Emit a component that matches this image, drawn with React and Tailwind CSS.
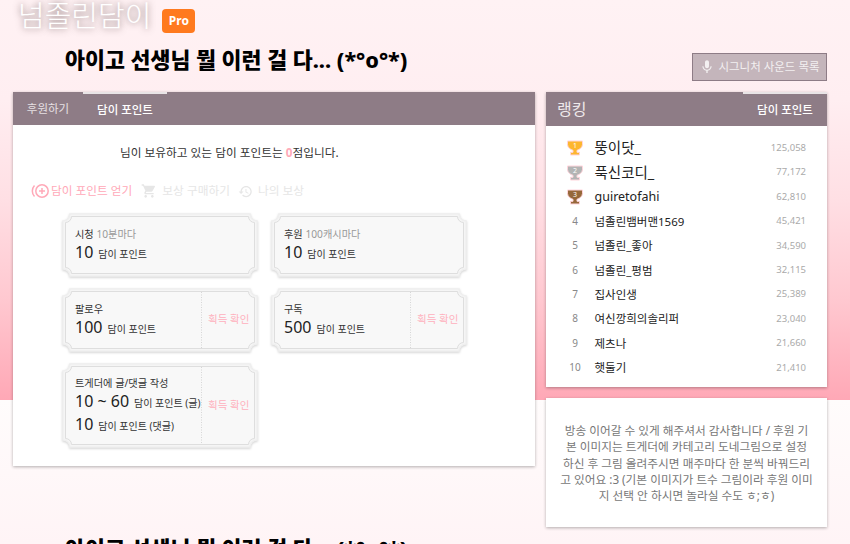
import React from "react";

const font = { fontFamily: '"Noto Sans", "Noto Sans CJK KR", sans-serif' };

const ranking = [
  { rank: 1, name: "뚱이닷_", points: "125,058", color: "#fdb62f", size: "text-[14.500px]" },
  { rank: 2, name: "푹신코디_", points: "77,172", color: "#b4b4b4", size: "text-[14.500px]" },
  { rank: 3, name: "guiretofahi", points: "62,810", color: "#96683a", size: "text-[12.500px]" },
  { rank: 4, name: "넘졸린뱀버맨1569", points: "45,421", size: "text-[11.500px]" },
  { rank: 5, name: "넘졸린_좋아", points: "34,590", size: "text-[11.500px]" },
  { rank: 6, name: "넘졸린_평범", points: "32,115", size: "text-[11.500px]" },
  { rank: 7, name: "집사인생", points: "25,389", size: "text-[11.500px]" },
  { rank: 8, name: "여신깡희의솔리퍼", points: "23,040", size: "text-[11.500px]" },
  { rank: 9, name: "제츠나", points: "21,660", size: "text-[11.500px]" },
  { rank: 10, name: "햇둘기", points: "21,410", size: "text-[11.500px]" },
];

const Trophy = ({ rank, color }) => (
  <svg width="18" height="18" viewBox="0 0 18 18" className="block">
    <path
      d="M1.500 2h15v3.500c0 3-3.200 5.300-5.500 5.800v2h2.500v2.700h-9v-2.700H7v-2C4.700 10.800 1.500 8.500 1.500 5.500z"
      fill={color}
      stroke="#ffd5dc"
      strokeWidth="1"
    />
    <text x="9" y="8.800" textAnchor="middle" fontSize="7" fill="#fff" fontFamily="Noto Sans">
      {rank}
    </text>
  </svg>
);

// concave-cornered ticket path, i = inset from the box, r = notch radius
const ticketPath = (w, h, i, r) =>
  `M${r + i} ${i}H${w - r - i}a${r} ${r} 0 0 0 ${r} ${r}V${h - r - i}a${r} ${r} 0 0 0 ${-r} ${r}H${r + i}a${r} ${r} 0 0 0 ${-r} ${-r}V${r + i}a${r} ${r} 0 0 0 ${r} ${-r}z`;

const TicketOutline = ({ height, split }) => (
  <svg
    width="196"
    height={height}
    viewBox={`0 0 196 ${height}`}
    className="absolute inset-0 pointer-events-none drop-shadow-[0_1px_1px_rgba(0,0,0,0.18)]"
  >
    <path d={ticketPath(196, height, 1, 7)} fill="#f5f5f5" stroke="#efefef" strokeWidth="1.500" />
    <path d={ticketPath(196, height, 3.500, 6)} fill="#f8f8f8" stroke="#dedede" strokeWidth="1" />
    {split && (
      <line x1="139.500" x2="139.500" y1="4" y2={height - 4} stroke="#d6d6d6" strokeDasharray="1 1.500" />
    )}
  </svg>
);

const Ticket = ({ height, split, children }) => (
  <div className="relative w-[196px] flex" style={{ height }}>
    <TicketOutline height={height} split={split} />
    <div className="relative w-[139px] shrink-0 pl-[13px] flex flex-col justify-center text-[#333]">{children}</div>
    {split && (
      <div className="relative flex-1 pl-[7px] flex items-center text-[10.500px] text-[#ffb0bd] whitespace-nowrap">
        획득 확인
      </div>
    )}
  </div>
);

const Amount = ({ value, label }) => (
  <div className="flex items-baseline gap-[5px] whitespace-nowrap leading-[21px]">
    <span className="text-[16px] text-[#222]">{value}</span>
    <span className="text-[10px] text-[#333]">{label}</span>
  </div>
);

const Heading = () => (
  <h2 className="text-[21.700px] leading-[30px] font-extrabold text-black whitespace-nowrap">
    아이고 선생님 뭘 이런 걸 다... (*°o°*)
  </h2>
);

export default function App() {
  return (
    <div
      className="w-[850px] h-[544px] overflow-hidden bg-[linear-gradient(#fff2f4_0px,#ffeef1_100px,#ffdfe4_200px,#ffc8d0_300px,#ffa8b6_400px,#fffcfc_400px,#fff4f6_544px)]"
      style={font}
    >
      <div className="h-[45px] pl-[18px] pt-[1px] flex items-start gap-[11px]">
        <h1 className="text-[29px] leading-[30px] font-light text-white whitespace-nowrap [text-shadow:0_0_7px_rgba(70,50,50,0.75)]">
          넘졸린담이
        </h1>
        <span className="mt-[8px] w-[33px] h-[24px] rounded-[4px] bg-[#ff7a1e] text-white text-[12px] font-bold flex items-center justify-center">
          Pro
        </span>
      </div>

      <div className="h-[47px] pl-[65px] pr-[23px] flex items-start justify-between">
        <Heading />
        <button className="mt-[8px] w-[135px] h-[28px] flex items-center justify-center gap-[3px] bg-[#c4b5bb] border border-[#8e7c86] text-[#f3f0f1] text-[11.500px] whitespace-nowrap">
          <svg width="16" height="16" viewBox="0 0 24 24" fill="#f3f0f1">
            <path d="M12 14c1.660 0 2.990-1.340 2.990-3L15 5c0-1.660-1.340-3-3-3S9 3.340 9 5v6c0 1.660 1.340 3 3 3zm5.300-3c0 3-2.540 5.100-5.300 5.100S6.700 14 6.700 11H5c0 3.410 2.720 6.230 6 6.720V21h2v-3.280c3.280-.48 6-3.300 6-6.720h-1.700z" />
          </svg>
          시그니처 사운드 목록
        </button>
      </div>

      <div className="pl-[13px] flex items-start gap-[11px]">
        <section className="w-[522px] h-[374px] bg-white shadow-[0_1px_3px_rgba(0,0,0,0.3)]">
          <div className="h-[33px] bg-[#8e7c86] flex text-[11.500px]">
            <div className="w-[70px] flex items-center justify-center text-[#e6e0e3]">후원하기</div>
            <div className="w-[84px] flex items-center justify-center text-white font-medium border-t-2 border-[#e9e4e6]">
              담이 포인트
            </div>
          </div>

          <p className="mt-[19px] pl-[107px] text-[11.700px] leading-[16px] text-[#333] whitespace-nowrap">
            님이 보유하고 있는 담이 포인트는 <span className="text-[#ffa9b8] font-bold">0</span>점입니다.
          </p>

          <div className="mt-[23px] pl-[18px] h-[16px] flex items-center text-[11.700px] whitespace-nowrap">
            <svg width="19" height="16" viewBox="0 0 19 16" fill="none" stroke="#ffa9b8" strokeWidth="1.500">
              <circle cx="11" cy="8" r="6.200" />
              <path d="M11 5v6M8 8h6" />
              <path d="M3.500 2.500a8 8 0 0 0 0 11" />
            </svg>
            <span className="ml-[1px] text-[#ffa9b8]">담이 포인트 얻기</span>
            <svg width="16" height="16" viewBox="0 0 24 24" fill="#e6e6e6" className="ml-[9px]">
              <path d="M7 18c-1.100 0-1.990.9-1.990 2S5.900 22 7 22s2-.9 2-2-.9-2-2-2zM1 2v2h2l3.600 7.590-1.350 2.450c-.16.28-.25.61-.25.96 0 1.100.9 2 2 2h12v-2H7.420c-.14 0-.25-.11-.25-.25l.03-.12.9-1.630h7.450c.75 0 1.410-.41 1.750-1.030l3.580-6.490c.08-.14.12-.31.12-.48 0-.55-.45-1-1-1H5.210l-.94-2H1zm16 16c-1.100 0-1.990.9-1.990 2s.89 2 1.990 2 2-.9 2-2-.9-2-2-2z" />
            </svg>
            <span className="ml-[5px] text-[#e6e6e6]">보상 구매하기</span>
            <svg width="15" height="15" viewBox="0 0 24 24" fill="#e6e6e6" className="ml-[8px]">
              <path d="M13 3c-4.970 0-9 4.030-9 9H1l3.890 3.890.07.14L9 12H6c0-3.870 3.130-7 7-7s7 3.130 7 7-3.130 7-7 7c-1.930 0-3.680-.79-4.940-2.060l-1.420 1.420C8.270 19.990 10.510 21 13 21c4.970 0 9-4.030 9-9s-4.030-9-9-9zm-1 5v5l4.280 2.540.72-1.210-3.500-2.080V8H12z" />
            </svg>
            <span className="ml-[5px] text-[#e6e6e6]">나의 보상</span>
          </div>

          <div className="mt-[14px] pl-[49px] grid grid-cols-[196px_196px] gap-x-[13px] gap-y-[11px]">
            <Ticket height={64}>
              <div className="text-[10.200px] leading-[16px] whitespace-nowrap">
                시청 <span className="text-[#999]">10분마다</span>
              </div>
              <Amount value="10" label="담이 포인트" />
            </Ticket>
            <Ticket height={64}>
              <div className="text-[10.200px] leading-[16px] whitespace-nowrap">
                후원 <span className="text-[#999]">100캐시마다</span>
              </div>
              <Amount value="10" label="담이 포인트" />
            </Ticket>
            <Ticket height={64} split>
              <div className="text-[10.200px] leading-[16px]">팔로우</div>
              <Amount value="100" label="담이 포인트" />
            </Ticket>
            <Ticket height={64} split>
              <div className="text-[10.200px] leading-[16px]">구독</div>
              <Amount value="500" label="담이 포인트" />
            </Ticket>
            <Ticket height={85} split>
              <div className="text-[10.200px] leading-[16px] whitespace-nowrap">트게더에 글/댓글 작성</div>
              <Amount value="10 ~ 60" label="담이 포인트 (글)" />
              <Amount value="10" label="담이 포인트 (댓글)" />
            </Ticket>
          </div>
        </section>

        <div className="w-[281px] flex flex-col gap-[11px]">
          <section className="h-[295px] bg-white shadow-[0_1px_3px_rgba(0,0,0,0.3)]">
            <div className="h-[34px] bg-[#8e7c86] flex items-center justify-between">
              <span className="pl-[11px] text-[16px] text-[#eee9eb]">랭킹</span>
              <div className="w-[84px] h-full flex items-center justify-center text-[11.500px] text-white font-medium border-t-2 border-[#e9e4e6]">
                담이 포인트
              </div>
            </div>
            <ol className="pt-[10px] pl-[20px] pr-[21px]">
              {ranking.map((r) => (
                <li key={r.rank} className="h-[24.400px] flex items-center">
                  <div className="w-[28.500px] flex justify-start">
                    {r.color ? (
                      <Trophy rank={r.rank} color={r.color} />
                    ) : (
                      <span className="w-[18px] text-center text-[10px] text-[#888]">{r.rank}</span>
                    )}
                  </div>
                  <span className={`flex-1 text-[#222] whitespace-nowrap ${r.size}`}>{r.name}</span>
                  <span className="text-[9.500px] text-[#aaa]">{r.points}</span>
                </li>
              ))}
            </ol>
          </section>

          <section className="h-[129px] bg-white shadow-[0_1px_3px_rgba(0,0,0,0.3)] pt-[24px] px-[10px]">
            <p className="text-[11.700px] leading-[16.300px] text-[#777] text-center whitespace-nowrap">
              방송 이어갈 수 있게 해주셔서 감사합니다 / 후원 기<br />
              본 이미지는 트게더에 카테고리 도네그림으로 설정<br />
              하신 후 그림 올려주시면 매주마다 한 분씩 바꿔드리<br />
              고 있어요 :3 (기본 이미지가 트수 그림이라 후원 이미<br />
              지 선택 안 하시면 놀라실 수도 ㅎ;ㅎ)
            </p>
          </section>
        </div>
      </div>

      <div className="mt-[7px] pl-[65px]">
        <Heading />
      </div>
    </div>
  );
}
